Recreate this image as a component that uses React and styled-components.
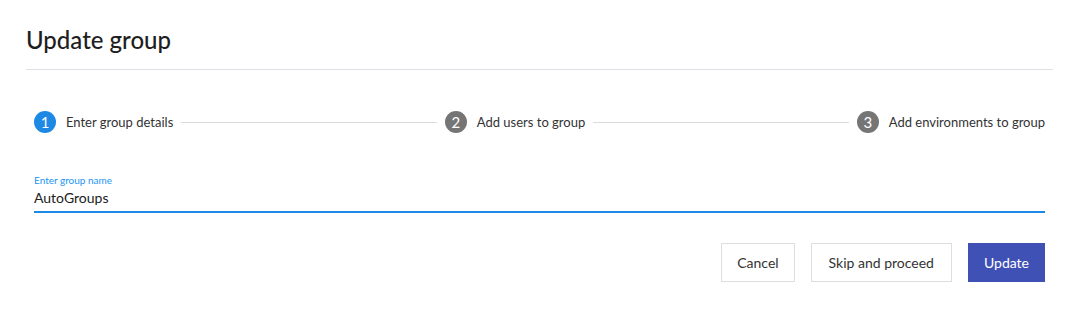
import React from 'react';
import styled, { createGlobalStyle } from 'styled-components';

const GlobalStyle = createGlobalStyle`
  body {
    margin: 0;
    background: #fff;
    font-family: 'Lato', 'Open Sans', sans-serif;
    color: #212121;
  }
`;

const Page = styled.div`
  padding: 0 30px 0 26px;
`;

const Header = styled.div`
  height: 69px;
  border-bottom: 1px solid #dfdfe6;
  display: flex;
  align-items: center;

  h1 {
    margin: 0;
    padding-top: 10px;
    font-size: 24px;
    font-weight: 500;
    color: #1e1e1e;
  }
`;

const Body = styled.div`
  padding: 40px 8px 0;
`;

const Stepper = styled.div`
  display: flex;
  align-items: center;
  height: 24px;
`;

const Step = styled.div`
  display: flex;
  align-items: center;
  gap: 10px;
  font-size: 13px;
  color: #333;
  white-space: nowrap;
`;

const StepNumber = styled.span`
  width: 22px;
  height: 22px;
  border-radius: 50%;
  background: ${(p) => (p.active ? '#1e88e5' : '#757575')};
  color: #fff;
  font-size: 15px;
  display: flex;
  align-items: center;
  justify-content: center;
`;

const Connector = styled.div`
  flex: 1;
  height: 1px;
  background: #dcdcdc;
  margin: 0 8px;
`;

const Field = styled.div`
  margin-top: 40px;
  border-bottom: 2px solid #1e88e5;
  padding-bottom: 5px;

  label {
    display: block;
    font-size: 10px;
    color: #2196f3;
    line-height: 12px;
  }

  input {
    border: none;
    outline: none;
    padding: 0;
    width: 100%;
    margin-top: 3px;
    font-family: inherit;
    font-size: 14px;
    color: #212121;
    background: transparent;
  }
`;

const Actions = styled.div`
  display: flex;
  justify-content: flex-end;
  gap: 16px;
  margin-top: 30px;
`;

const Button = styled.button`
  height: 39px;
  padding: 0 ${(p) => (p.wide ? 17 : 15)}px;
  font-family: inherit;
  font-size: 14px;
  border: 1px solid ${(p) => (p.primary ? '#3f51b5' : '#dedede')};
  background: ${(p) => (p.primary ? '#3f51b5' : '#fff')};
  color: ${(p) => (p.primary ? '#fff' : '#333')};
  cursor: pointer;
`;

const steps = ['Enter group details', 'Add users to group', 'Add environments to group'];

export default function App() {
  return (
    <>
      <GlobalStyle />
      <Page>
        <Header>
          <h1>Update group</h1>
        </Header>
        <Body>
          <Stepper>
            {steps.map((s, i) => (
              <React.Fragment key={s}>
                {i > 0 && <Connector />}
                <Step>
                  <StepNumber active={i === 0}>{i + 1}</StepNumber>
                  {s}
                </Step>
              </React.Fragment>
            ))}
          </Stepper>
          <Field>
            <label>Enter group name</label>
            <input defaultValue="AutoGroups" />
          </Field>
          <Actions>
            <Button>Cancel</Button>
            <Button wide>Skip and proceed</Button>
            <Button primary>Update</Button>
          </Actions>
        </Body>
      </Page>
    </>
  );
}
